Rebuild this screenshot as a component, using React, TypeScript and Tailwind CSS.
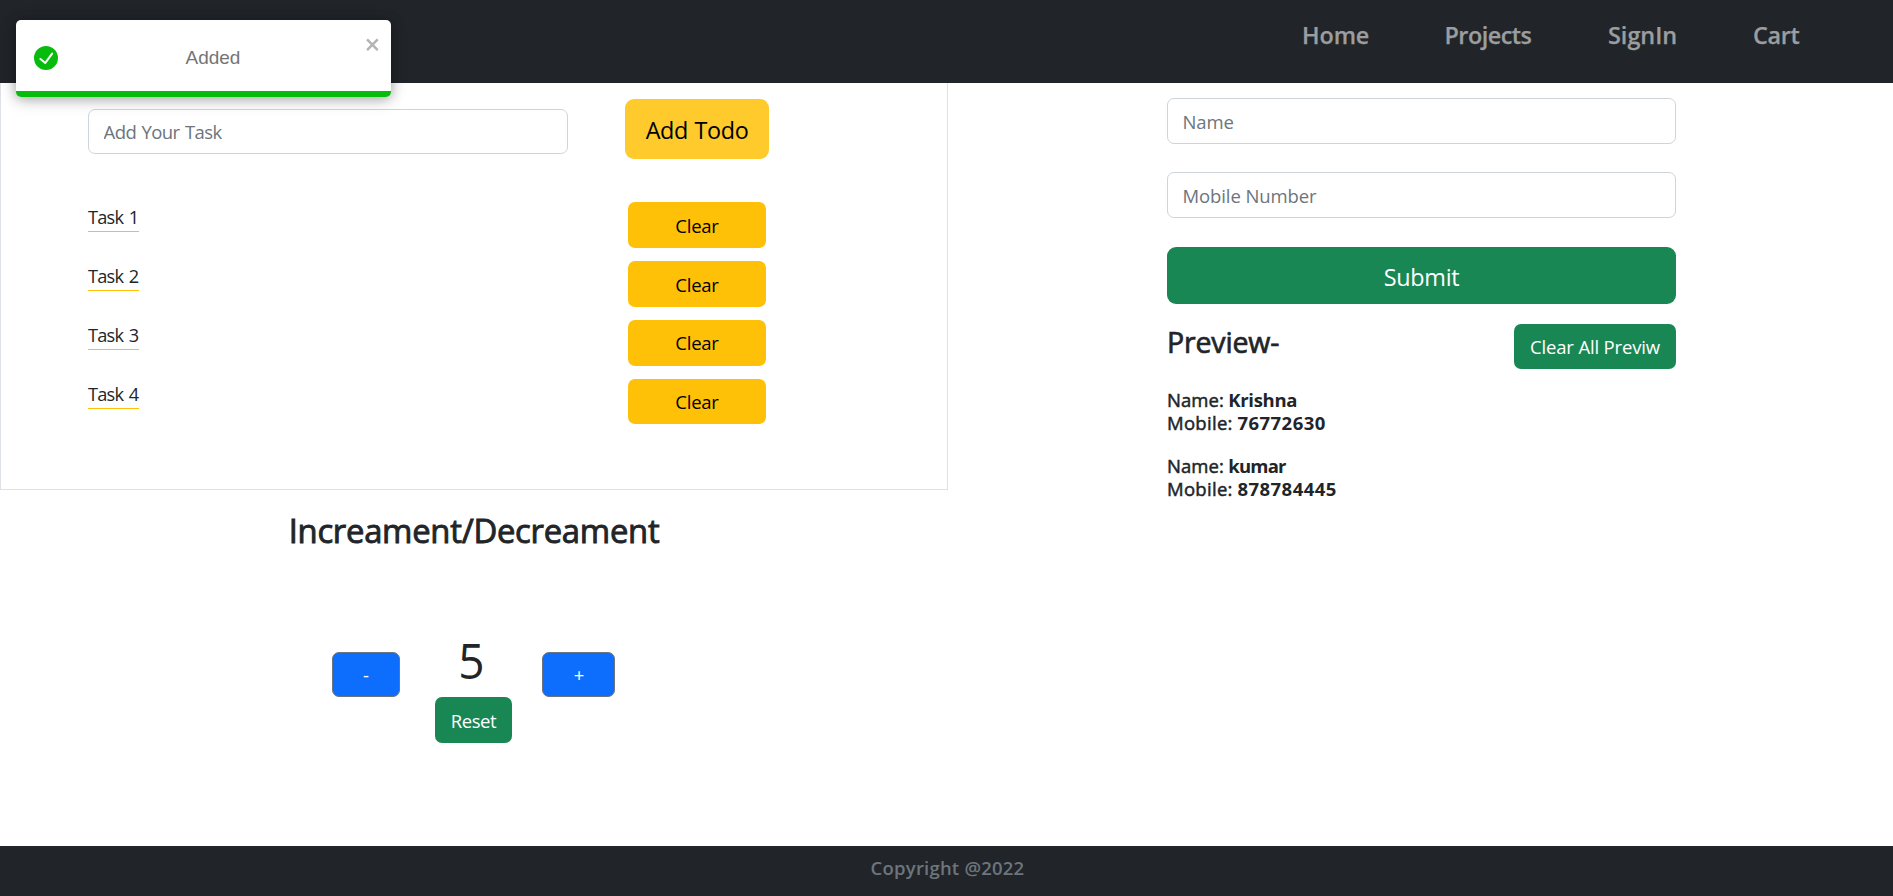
import React, { useState } from "react";

const navLinks = [
  { label: "Home", cls: "w-[142.4px] tracking-[-0.15px]" },
  { label: "Projects", cls: "w-[163.5px] tracking-[-0.52px]" },
  { label: "SignIn", cls: "w-[145px]" },
  { label: "Cart", cls: "w-[140px] tracking-[-0.36px]" },
];

const tasks = [
  { name: "Task 1", btn: "h-[46px] pt-[2px]" },
  { name: "Task 2", btn: "h-[46px] pt-[2px]" },
  { name: "Task 3", btn: "h-[46px]" },
  { name: "Task 4", btn: "h-[45px] pt-[1px]" },
];

const people = [
  { name: "Krishna", mobile: "76772630", cls: "tracking-[-0.31px]" },
  { name: "kumar", mobile: "878784445", cls: "tracking-[-0.8px]" },
];

function Navbar() {
  return (
    <header className="flex h-[83px] shrink-0 justify-end bg-[#212529] pt-[17px]">
      <nav className="flex">
        {navLinks.map((link) => (
          <a
            key={link.label}
            href="#"
            className={`block text-[23.4px] leading-9 font-semibold text-[#9b9d9f] [-webkit-text-stroke:0.25px_#9b9d9f] ${link.cls}`}
          >
            {link.label}
          </a>
        ))}
      </nav>
    </header>
  );
}

function Toast() {
  return (
    <div className="absolute top-5 left-4 h-[77px] w-[375px] overflow-visible rounded-[5px] bg-white shadow-[0_1px_12px_rgba(0,0,0,0.28),0_3px_18px_rgba(0,0,0,0.16)]">
      <div className="flex h-[71px] items-start pl-[18px]">
        <svg viewBox="0 0 24 24" className="mt-[26px] h-6 w-6 shrink-0" fill="#07bc0c">
          <path d="M12 0a12 12 0 1012 12A12.014 12.014 0 0012 0zm6.927 8.2l-6.845 9.289a1.011 1.011 0 01-1.43.188l-4.888-3.908a1 1 0 111.25-1.562l4.076 3.261 6.227-8.451a1 1 0 111.61 1.183z" />
        </svg>
        <span className="mt-[25px] flex-1 pl-[3px] text-center font-['Liberation_Sans',sans-serif] text-[19px] leading-[25px] text-[#757575]">
          Added
        </span>
        <button className="mt-[15px] mr-[9.5px] shrink-0" aria-label="close">
          <svg viewBox="0 0 14 16" className="h-[19px] w-[16.6px]" fill="#b3b3b3">
            <path
              fillRule="evenodd"
              d="M7.71 8.23l3.75 3.75-1.48 1.48-3.75-3.75-3.75 3.75L1 11.98l3.75-3.75L1 4.48 2.48 3l3.75 3.75L9.98 3l1.48 1.48-3.75 3.75z"
            />
          </svg>
        </button>
      </div>
      <div className="h-[6px] rounded-b-[5px] bg-[#07bc0c]" />
    </div>
  );
}

function TodoCard() {
  return (
    <section className="h-[407px] w-[948px] border border-t-0 border-[#dee2e6]">
      <div className="flex items-start pt-4 pl-[87px]">
        <input
          className="mt-[10px] h-[45px] w-[480px] rounded-[7px] border border-[#ced4da] px-[14.5px] text-[18.5px] tracking-[-0.55px] [word-spacing:1px] placeholder:text-[#6c757d]"
          placeholder="Add Your Task"
        />
        <button className="ml-[57px] flex h-[60px] w-[144px] items-center justify-center rounded-[9px] bg-[#ffca2c] pt-[1px] text-[23.4px] leading-9 tracking-[-0.4px] [word-spacing:1px] text-black">
          Add Todo
        </button>
      </div>
      <ul className="mt-[43px] pl-[87px]">
        {tasks.map((task) => (
          <li key={task.name} className="flex h-[59px] items-start">
            <div className="w-[540px]">
              <span className="mt-px inline-block w-[51px] border-b border-[#ffc107] text-[18.2px] leading-7 tracking-[-0.75px] [word-spacing:1.5px] whitespace-nowrap">
                {task.name}
              </span>
            </div>
            <button
              className={`flex w-[138px] items-center justify-center rounded-[7px] bg-[#ffc107] text-[18.5px] leading-7 tracking-[-0.25px] text-black ${task.btn}`}
            >
              Clear
            </button>
          </li>
        ))}
      </ul>
    </section>
  );
}

function Counter() {
  const [count, setCount] = useState(5);
  return (
    <section className="w-[948px]">
      <h2 className="mt-[21px] text-center text-[32.8px] leading-10 tracking-[-0.26px] [-webkit-text-stroke:0.9px_#212529]">
        Increament/Decreament
      </h2>
      <div className="mt-[80px] flex items-start pl-[332px]">
        <button
          onClick={() => setCount(count - 1)}
          className="mt-[21px] flex h-[45px] w-[68px] items-center justify-center rounded-[7px] border border-[#6c757d] bg-[#0d6efd] text-[18.5px] text-white"
        >
          -
        </button>
        <div className="ml-[35px] flex w-[77px] flex-col items-center">
          <span className="mr-[5px] h-[66px] text-[50px] leading-[58px] [transform:scaleX(0.92)]">{count}</span>
          <button
            onClick={() => setCount(0)}
            className="flex h-[46px] w-[77px] items-center justify-center rounded-[7px] bg-[#198754] pt-[2px] text-[18.5px] tracking-[-0.4px] text-white"
          >
            Reset
          </button>
        </div>
        <button
          onClick={() => setCount(count + 1)}
          className="mt-[21px] ml-[30px] flex h-[45px] w-[73px] items-center justify-center rounded-[7px] border border-[#6c757d] bg-[#0d6efd] pl-px text-[18.5px] text-white"
        >
          +
        </button>
      </div>
    </section>
  );
}

function ContactForm() {
  return (
    <section className="ml-[219px] w-[509px] pt-[15px]">
      <input
        className="block h-[46px] w-full rounded-[7px] border border-[#ced4da] px-[14.5px] text-[18.5px] tracking-[-0.1px] placeholder:text-[#6c757d]"
        placeholder="Name"
      />
      <input
        className="mt-7 block h-[46px] w-full rounded-[7px] border border-[#ced4da] px-[14.5px] text-[18.5px] tracking-[-0.1px] placeholder:text-[#6c757d]"
        placeholder="Mobile Number"
      />
      <button className="mt-[29px] flex h-[57px] w-full items-center justify-center rounded-[9px] bg-[#198754] pt-[3px] text-[23.4px] leading-9 tracking-[-0.31px] text-white">
        Submit
      </button>
      <div className="mt-5 flex items-start justify-between">
        <h3 className="text-[28.5px] leading-9 tracking-[-0.15px] [-webkit-text-stroke:0.7px_#212529]">
          Preview-
        </h3>
        <button className="flex h-[45px] w-[162px] items-center justify-center rounded-[7px] bg-[#198754] pt-[1px] text-[18.5px] tracking-[-0.15px] text-white">
          Clear All Previw
        </button>
      </div>
      <div className="mt-[19px] flex flex-col gap-5">
        {people.map((p) => (
          <div key={p.name} className="text-[18.5px] leading-[23px]">
            <div className="flex">
              <span className="w-[61.3px] tracking-[0.07px] [-webkit-text-stroke:0.5px_#212529]">Name:</span>
              <b className={p.cls}>{p.name}</b>
            </div>
            <div className="flex">
              <span className="w-[70.5px] tracking-[0.3px] [-webkit-text-stroke:0.5px_#212529]">Mobile:</span>
              <b className="tracking-[0.45px]">{p.mobile}</b>
            </div>
          </div>
        ))}
      </div>
    </section>
  );
}

export default function App() {
  return (
    <div className="relative flex h-[896px] w-full flex-col overflow-hidden bg-white font-['Open_Sans','Noto_Sans',sans-serif] text-[#212529]">
      <Navbar />
      <main className="flex flex-1 items-start">
        <div className="flex w-[948px] flex-col">
          <TodoCard />
          <Counter />
        </div>
        <ContactForm />
      </main>
      <footer className="h-[50px] shrink-0 bg-[#212529] pt-[7px] pl-[2px] text-center text-[18.5px] leading-[30px] font-semibold tracking-[0.21px] text-[#6c757d]">
        Copyright @2022
      </footer>
      <Toast />
    </div>
  );
}
